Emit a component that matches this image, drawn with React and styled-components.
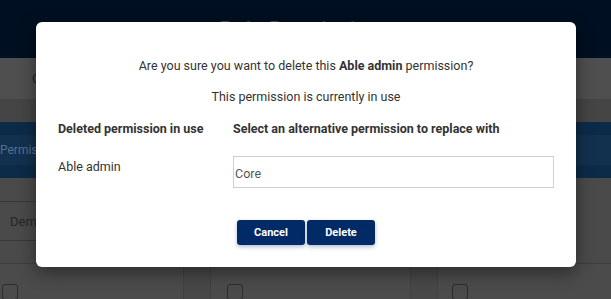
import React from "react";
import styled, { createGlobalStyle } from "styled-components";

const Global = createGlobalStyle`
  html, body { margin: 0; padding: 0; background: #4a4a4a; }
  body { font-family: Roboto, "Liberation Sans", Arial, sans-serif; }
  * { box-sizing: border-box; }
`;

const Page = styled.div`
  position: relative;
  width: 611px;
  height: 299px;
  overflow: hidden;
  background: #4a4a4a;
  display: flex;
  flex-direction: column;
`;

const Header = styled.header`
  height: 58px;
  flex: none;
  background: #010f22;
  display: flex;
  justify-content: center;
  padding-top: 17px;
`;

const Title = styled.h1`
  margin: 0;
  font-size: 21px;
  font-weight: 500;
  color: #4b5058;
  letter-spacing: 0.5px;
  line-height: 24px;
`;

const TabBar = styled.div`
  height: 41px;
  flex: none;
  background: #4f4f4f;
  display: flex;
  align-items: center;
  padding-left: 32px;
  font-size: 13px;
  color: #222;
`;

const SubBar = styled.div`
  height: 23px;
  flex: none;
  background: #454545;
`;

const Band = styled.div`
  height: 56px;
  flex: none;
  background: #0c2b49;
  padding: 13px 0;
`;

const BandInner = styled.div`
  height: 30px;
  background: #12314f;
  display: flex;
  align-items: center;
  font-size: 12px;
  color: #56708b;
`;

const FilterArea = styled.div`
  height: 86px;
  flex: none;
  padding-top: 23px;
  border-bottom: 1px solid #3e3e3e;
`;

const SelectBox = styled.div`
  width: 200px;
  height: 40px;
  border-top: 1px solid #383838;
  border-bottom: 1px solid #383838;
  display: flex;
  align-items: center;
  padding-left: 10px;
  font-size: 13px;
  color: #262626;
`;

const Grid = styled.div`
  flex: 1;
  display: grid;
  grid-template-columns: 183px 28px 199px 28px 1fr;
  background: #4b4b4b;
`;

const Cell = styled.div`
  padding-top: 20px;
  padding-left: ${(p) => p.$inset}px;
`;

const Gutter = styled.div`
  border-left: 1px solid #414141;
  border-right: 1px solid #414141;
  background: #484848;
`;

const Check = styled.span`
  display: block;
  width: 16px;
  height: 16px;
  border: 1px solid #2c2c2c;
  border-radius: 3px;
`;

const Modal = styled.div`
  position: absolute;
  left: 36px;
  top: 22px;
  width: 540px;
  height: 245px;
  background: #fff;
  border-radius: 6px;
  box-shadow: 0 5px 18px rgba(0, 0, 0, 0.45);
  padding: 36px 22px 22px;
  display: flex;
  flex-direction: column;
  color: #333;
`;

const Message = styled.p`
  margin: 0 0 ${(p) => p.$after}px;
  text-align: center;
  font-size: 12.5px;
  line-height: 16px;
`;

const Table = styled.div`
  display: grid;
  grid-template-columns: 175px 1fr;
  row-gap: 19px;
  align-items: start;
`;

const HeadCell = styled.div`
  font-size: 12.5px;
  line-height: 16px;
  font-weight: 700;
`;

const BodyCell = styled.div`
  font-size: 12.5px;
  line-height: 16px;
  padding-top: 3px;
`;

const Input = styled.div`
  height: 32px;
  border: 1px solid #cfcfcf;
  display: flex;
  align-items: center;
  padding: 2px 0 0 1px;
  font-size: 12.5px;
  color: #555;
`;

const Actions = styled.div`
  margin-top: 32px;
  display: flex;
  justify-content: center;
  gap: 2px;
`;

const Button = styled.button`
  width: 68px;
  height: 25px;
  border: none;
  border-radius: 3px;
  background: #012a66;
  color: #fff;
  font-family: Roboto, "Liberation Sans", Arial, sans-serif;
  font-size: 11px;
  font-weight: 700;
  box-shadow: 0 2px 4px rgba(1, 42, 102, 0.3);
  padding: 0 0 1px;
`;

export default function App() {
  return (
    <>
      <Global />
      <Page>
        <Header>
          <Title>Role Permissions</Title>
        </Header>
        <TabBar>Configuration</TabBar>
        <SubBar />
        <Band>
          <BandInner>Permissions</BandInner>
        </Band>
        <FilterArea>
          <SelectBox>Demo</SelectBox>
        </FilterArea>
        <Grid>
          <Cell $inset={2}><Check /></Cell>
          <Gutter />
          <Cell $inset={16}><Check /></Cell>
          <Gutter />
          <Cell $inset={14}><Check /></Cell>
        </Grid>

        <Modal role="dialog">
          <Message $after={15}>
            Are you sure you want to delete this <b>Able admin</b> permission?
          </Message>
          <Message $after={16}>This permission is currently in use</Message>
          <Table>
            <HeadCell>Deleted permission in use</HeadCell>
            <HeadCell>Select an alternative permission to replace with</HeadCell>
            <BodyCell>Able admin</BodyCell>
            <Input>Core</Input>
          </Table>
          <Actions>
            <Button>Cancel</Button>
            <Button>Delete</Button>
          </Actions>
        </Modal>
      </Page>
    </>
  );
}
